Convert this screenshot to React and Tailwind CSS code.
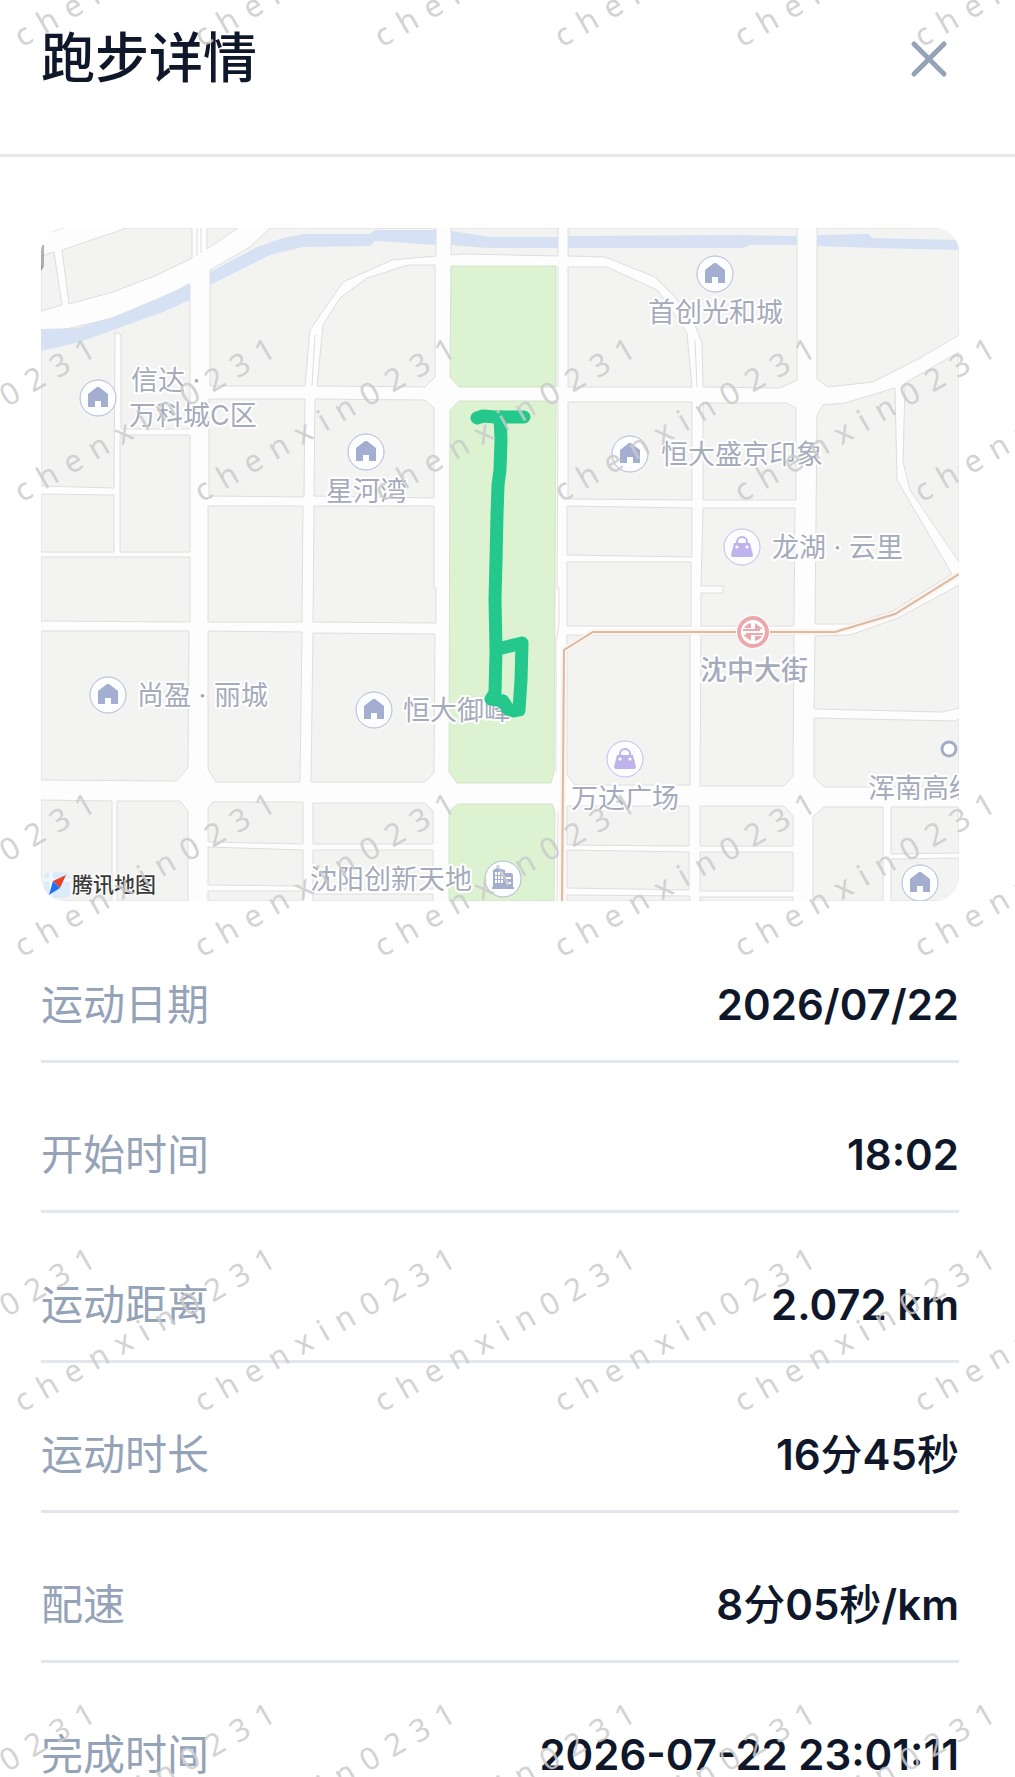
import React from 'react';
import { X } from 'lucide-react';

// Detail rows
const details = [
  { label: '运动日期', value: '2026/07/22' },
  { label: '开始时间', value: '18:02' },
  { label: '运动距离', value: '2.072 km' },
  { label: '运动时长', value: '16分45秒' },
  { label: '配速', value: '8分05秒/km' },
  { label: '完成时间', value: '2026-07-22 23:01:11' },
];

// City blocks, everything between them is road
const blocks = [
  '41,256 54,252 62,305 41,311',
  '62,250 127,228 192,228 192,258 157,275 113,292 69,304',
  '207,228 238,228 207,249',
  '210,270 250,247 270,228 436,228 436,256 392,260 343,282 310,330 305,386 210,386',
  '317,386 323,325 340,298 367,278 408,265 435,265 435,377 425,387',
  '451,228 558,228 558,256 463,254 451,255',
  '568,228 797,228 797,380 780,388 703,387 702,343 695,325 675,297 655,277 605,257 568,256',
  '568,267 607,267 657,290 665,300 687,333 692,387 568,387',
  '817,228 959,228 959,335 920,358 873,382 828,387 817,379',
  '41,335 113,318 190,285 190,429 121,429 121,336 119,333 115,333 114,488 41,486',
  '120,435 190,435 190,552 120,552',
  '41,494 114,495 114,552 41,552',
  '41,557 190,557 190,622 41,621',
  '41,631 189,631 188,768 176,781 41,780',
  '41,800 112,801 112,901 41,901',
  '117,801 180,801 188,811 188,901 117,901',
  '209,399 305,399 304,497 209,496',
  '208,506 303,506 302,622 208,622',
  '208,631 302,632 300,782 216,782 208,769',
  '208,808 213,802 303,802 303,844 208,842',
  '208,847 303,850 303,886 208,885',
  '208,891 303,891 303,901 208,901',
  '315,399 425,400 434,408 434,498 314,496',
  '314,506 434,506 434,588 436,588 436,623 313,622',
  '313,633 435,634 434,773 425,782 311,782',
  '313,803 425,803 433,811 433,844 313,844',
  '313,850 433,850 433,889 313,889',
  '313,894 433,894 433,901 313,901',
  '568,402 692,402 692,500 568,499',
  '567,506 692,508 692,557 567,555',
  '567,562 691,562 691,626 567,626',
  '567,635 690,635 690,785 575,785 567,775',
  '567,806 689,806 689,846 567,845',
  '567,850 689,852 689,890 567,888',
  '567,895 690,896 690,901 567,901',
  '703,403 787,403 796,408 796,500 703,500',
  '703,508 795,508 794,626 701,626 701,593 723,593 723,586 701,586',
  '701,635 794,635 793,776 784,786 700,786',
  '700,806 784,806 793,816 793,846 700,846',
  '700,852 793,852 793,891 700,891',
  '700,897 793,897 793,901 700,901',
  '895,388 845,403 823,405 817,415 815,624 853,624 893,611 952,574 897,480',
  '905,383 959,352 959,562 910,490 903,462',
  '815,636 850,635 898,618 959,585 959,708 943,712 814,709',
  '814,718 955,721 959,719 959,787 824,787 814,777',
  '824,807 883,807 883,901 813,901 813,817',
  '891,807 959,807 959,853 891,854',
  '891,859 959,858 959,901 891,901',
];

const parks = [
  '451,266 556,266 556,387 459,387 450,377',
  '459,401 556,401 554,772 551,783 457,783 449,772 450,410',
  '458,804 552,804 555,812 554,901 449,901 449,811',
];

const rivers = [
  '41,329 77,328 113,317 163,297 190,283 190,300 163,312 113,330 80,342 41,351',
  '210,272 257,247 283,238 303,234 370,234 375,230 436,230 436,245 407,243 375,241 370,246 303,247 270,255 240,270 210,285',
  '451,231 492,237 558,237 558,248 487,248 451,245',
  '568,236 737,235 797,236 797,245 750,245 743,248 568,248',
  '817,235 868,234 872,238 959,240 959,250 873,248 817,246',
];

// Places on the map
const homes = [
  [715, 274],
  [98, 398],
  [366, 452],
  [630, 454],
  [108, 695],
  [374, 710],
  [920, 883],
];

const malls = [
  [742, 547],
  [625, 759],
];

const places = [
  { name: '首创光和城', x: 648, y: 322 },
  { name: '信达 ·', x: 131, y: 390 },
  { name: '万科城C区', x: 129, y: 425 },
  { name: '星河湾', x: 326, y: 501 },
  { name: '恒大盛京印象', x: 661, y: 464 },
  { name: '龙湖 · 云里', x: 772, y: 557 },
  { name: '尚盈 · 丽城', x: 137, y: 705 },
  { name: '恒大御峰', x: 403, y: 720 },
  { name: '万达广场', x: 571, y: 808 },
  { name: '浑南高级', x: 868, y: 798 },
  { name: '沈阳创新天地', x: 310, y: 889 },
];

// Watermark grid
const watermarkRows = [0, 1, 2, 3, 4];
const watermarkCols = [-1, 0, 1, 2, 3, 4, 5];

const HomePin = ({ x, y }) => (
  <g transform={`translate(${x} ${y})`}>
    <circle r="18" fill="#fdfeff" stroke="#b0b8d6" />
    <path d="M-10 -4 L-1 -11 H1 L10 -4 V9 H3 V3 H-3 V9 H-10 Z" fill="#a3aed1" />
  </g>
);

const MallPin = ({ x, y }) => (
  <g transform={`translate(${x} ${y})`}>
    <circle r="18" fill="#fdfdff" stroke="#c5baea" />
    <path d="M-5 -3 V-5 A5 5 0 0 1 5 -5 V-3" fill="none" stroke="#bfb3ec" strokeWidth="2" />
    <path d="M-8 -4 H8 L11 8 Q11 10 9 10 H-9 Q-11 10 -11 8 Z" fill="#bfb3ec" />
    <circle cx="-5" cy="0" r="1.6" fill="#fff" />
    <circle cx="5" cy="0" r="1.6" fill="#fff" />
  </g>
);

const OfficePin = ({ x, y }) => (
  <g transform={`translate(${x} ${y})`}>
    <circle r="18" fill="#fdfeff" stroke="#b0b8d6" />
    <path d="M-10 -9 L-6 -11 L2 -9 V-6 H8 Q10 -6 10 -4 V8 H11 V10 H-11 V8 H-10 Z" fill="#a3aed1" />
    <path
      d="M-8 -7 h2 v3 h-2z M-5 -7 h2 v3 h-2z M-2 -7 h2 v3 h-2z M-8 -3 h2 v3 h-2z M-5 -3 h2 v3 h-2z M-2 -3 h2 v3 h-2z M-8 1 h2 v3 h-2z M-5 1 h2 v3 h-2z M-2 1 h2 v3 h-2z M3 -2 h5 v2 h-5z M3 3 h5 v2 h-5z"
      fill="#fff"
    />
  </g>
);

const MetroPin = ({ x, y }) => (
  <g transform={`translate(${x} ${y})`}>
    <circle r="17" fill="#fff" />
    <circle r="14" fill="#fff" stroke="#eba9ac" strokeWidth="4" />
    <path d="M-2 -9 V-4 H-9 Q-7 -8 -2 -9 Z M2 -9 L10 -3 H2 Z" fill="#eba9ac" />
    <path d="M2 9 V4 H9 Q7 8 2 9 Z M-2 9 L-10 3 H-2 Z" fill="#eba9ac" />
    <path d="M-10 -2 H7 M10 2 H-7" fill="none" stroke="#eba9ac" strokeWidth="2" />
  </g>
);

const RunMap = () => (
  <svg
    viewBox="41 228 918 673"
    className="block h-auto w-full rounded-3xl bg-[#fdfdfd] font-['Inter','Noto_Sans_CJK_SC',sans-serif]"
    role="img"
    aria-label="跑步轨迹"
  >
    {/* Ground */}
    <g fill="#f3f3f2" stroke="#dededd">
      {blocks.map((points) => (
        <polygon key={points} points={points} />
      ))}
    </g>
    <g fill="#dcf2d1" stroke="#d3e3cc">
      {parks.map((points) => (
        <polygon key={points} points={points} />
      ))}
    </g>
    <g fill="#d6e2f3">
      {rivers.map((points) => (
        <polygon key={points} points={points} />
      ))}
    </g>
    <g fill="none" stroke="#dededd">
      <path d="M197 228 V256 M201 228 V253 M315 335 L312 386 M695 340 L697 387" />
      <path d="M558 266 V387 M558 401 L557 588 H559 V625 L556 640 V772 M558 812 L557 901" />
      <path d="M53 232 Q57 229 64 228" />
    </g>
    <path d="M41 247 V268 M43 245 V266 L41 270" fill="none" stroke="#999" strokeWidth="1.5" />

    {/* Metro line */}
    <path d="M562 901 L564 650 L593 632 H835 L895 614 L959 574" fill="none" stroke="#fff3ea" strokeWidth="6" />
    <path d="M562 901 L564 650 L593 632 H835 L895 614 L959 574" fill="none" stroke="#d6bba9" strokeWidth="2" />

    {/* Places */}
    {homes.map(([x, y]) => (
      <HomePin key={`${x}-${y}`} x={x} y={y} />
    ))}
    {malls.map(([x, y]) => (
      <MallPin key={`${x}-${y}`} x={x} y={y} />
    ))}
    <OfficePin x={503} y={879} />
    <MetroPin x={753} y={632} />
    <circle cx="949" cy="749" r="7" fill="#fff" stroke="#a3aec6" strokeWidth="3" />
    <g fill="#a6abbc" stroke="#fff" strokeWidth="4" strokeLinejoin="round" paintOrder="stroke" fontSize="27">
      {places.map((place) => (
        <text key={place.name} x={place.x} y={place.y}>
          {place.name}
        </text>
      ))}
      <text x="700" y="680" fontWeight="500">
        沈中大街
      </text>
    </g>

    {/* Route */}
    <g fill="none" stroke="#25c88c" strokeWidth="13" strokeLinecap="round" strokeLinejoin="round">
      <path d="M477 418 L483 416 L495 417 L524 417" />
      <path d="M500 417 L501 440 L500 470 L498 485 L497 515 L496 560 L495 600 L496 650 L495 693 L491 699 L503 701 L508 709 L514 711 L519 710 L521 680 L522 643 L498 649" />
    </g>

    {/* Map provider */}
    <rect x="44" y="872" width="26" height="26" rx="6" fill="#dcebfa" />
    <path d="M44 880 H70 M51 872 V898" stroke="#f3f9ff" strokeWidth="3" />
    <path d="M66 875 L60 888 L53 881 Z" fill="#e8412c" />
    <path d="M49 895 L53 881 L60 888 Z" fill="#1f73f0" />
    <text x="72" y="892" fontSize="21" fontWeight="500" fill="#3a3a3a" stroke="#fff" strokeWidth="2" paintOrder="stroke">
      腾讯地图
    </text>
  </svg>
);

const Watermark = () => (
  <svg
    className="pointer-events-none absolute inset-0 h-full w-full font-['Noto_Sans',sans-serif] text-[31px] tracking-[11px]"
    aria-hidden="true"
  >
    <g fill="#cbcbcb" fillOpacity="0.85">
      {watermarkRows.map((row) =>
        watermarkCols.map((col) => (
          <text key={`${row}-${col}`} transform={`translate(${22 + col * 180} ${48 + row * 455}) rotate(-30)`}>
            chenxin0231
          </text>
        ))
      )}
    </g>
  </svg>
);

// Units are set a little lighter than the digits around them
const DetailValue = ({ value }) =>
  value.split(/([分秒])/).map((part, index) =>
    /[分秒]/.test(part) ? (
      <span key={index} className="font-medium">
        {part}
      </span>
    ) : (
      part
    )
  );

const App = () => {
  return (
    <div className="relative flex h-screen flex-col overflow-hidden bg-white font-['Inter','Noto_Sans_CJK_SC',sans-serif] text-[#0f172a]">
      {/* Header */}
      <header className="flex shrink-0 items-center justify-between border-b-[3px] border-[#e5e7e8] pt-[26px] pr-14 pb-[62px] pl-[41px]">
        <h1 className="text-[54px] leading-[66px] font-medium">跑步详情</h1>
        <button type="button" aria-label="关闭" className="text-[#94a3b8]">
          <X size={60} />
        </button>
      </header>

      <main className="min-h-0 flex-1 overflow-y-auto pt-[71px] pr-14 pl-[41px] [scrollbar-width:none]">
        <RunMap />

        {/* Details */}
        <dl className="mt-3">
          {details.map((item) => (
            <div
              key={item.label}
              className="flex items-center justify-between border-b-[3px] border-[#e2e7ed] pt-[60px] pb-6 text-[42px] leading-[63px]"
            >
              <dt className="text-[#94a3b8]">{item.label}</dt>
              <dd className="font-semibold">
                <DetailValue value={item.value} />
              </dd>
            </div>
          ))}
        </dl>
      </main>

      <Watermark />
    </div>
  );
};

export default App;
